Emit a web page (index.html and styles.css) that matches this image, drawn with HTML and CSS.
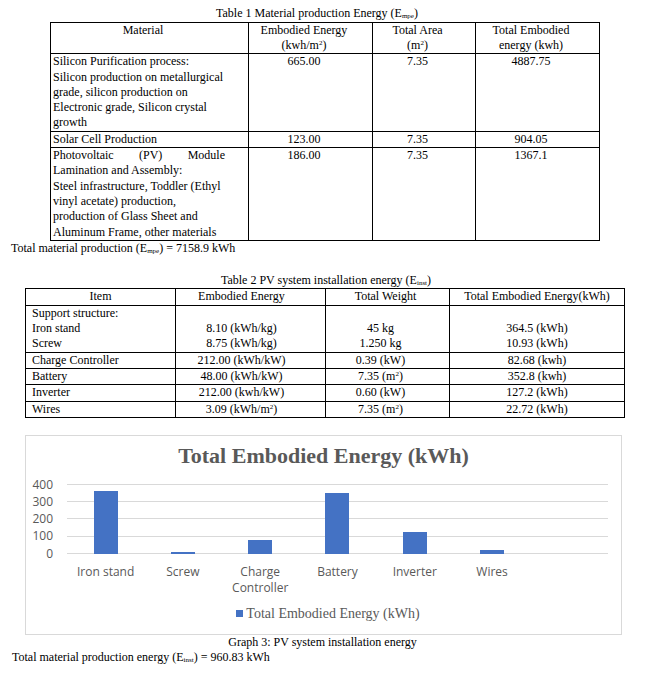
FILE: index.html
```html
<!DOCTYPE html>
<html>
<head>
<meta charset="utf-8">
<title>PV embodied energy</title>
<link rel="stylesheet" href="styles.css">
</head>
<body>
<div class="page">
  <div class="caption cap1">Table 1 Material production Energy (E<sub>mpe</sub>)</div>
  <table class="t1">
    <colgroup><col class="w198"><col class="w124"><col class="w103"><col class="w124"></colgroup>
    <tr>
      <th>Material</th>
      <th>Embodied Energy<br>(kwh/m<sup>2</sup>)</th>
      <th>Total Area<br>(m<sup>2</sup>)</th>
      <th>Total Embodied<br>energy (kwh)</th>
    </tr>
    <tr>
      <td class="txt">Silicon Purification process:<br>Silicon production on metallurgical<br>grade, silicon production on<br>Electronic grade, Silicon crystal<br>growth</td>
      <td>665.00</td><td>7.35</td><td>4887.75</td>
    </tr>
    <tr>
      <td class="txt">Solar Cell Production</td>
      <td>123.00</td><td>7.35</td><td>904.05</td>
    </tr>
    <tr>
      <td class="txt"><span class="just"><span>Photovoltaic</span><span>(PV)</span><span>Module</span></span>Lamination and Assembly:<br>Steel infrastructure, Toddler (Ethyl<br>vinyl acetate) production,<br>production of Glass Sheet and<br>Aluminum Frame, other materials</td>
      <td>186.00</td><td>7.35</td><td>1367.1</td>
    </tr>
  </table>
  <div class="total">Total material production (E<sub>mpe</sub>) = 7158.9 kWh</div>

  <div class="caption cap2">Table 2 PV system installation energy (E<sub>inst</sub>)</div>
  <table class="t2">
    <colgroup><col class="w150"><col class="w150"><col class="w124b"><col class="w175"></colgroup>
    <tr>
      <th>Item</th>
      <th class="e">Embodied Energy</th>
      <th class="wh">Total Weight</th>
      <th>Total Embodied Energy(kWh)</th>
    </tr>
    <tr>
      <td class="txt">Support structure:<br>Iron stand<br>Screw</td>
      <td class="e">&nbsp;<br>8.10 (kWh/kg)<br>8.75 (kWh/kg)</td>
      <td class="w">&nbsp;<br>45 kg<br>1.250 kg</td>
      <td>&nbsp;<br>364.5 (kWh)<br>10.93 (kWh)</td>
    </tr>
    <tr>
      <td class="txt">Charge Controller</td>
      <td class="e">212.00 (kWh/kW)</td>
      <td class="w">0.39 (kW)</td>
      <td>82.68 (kwh)</td>
    </tr>
    <tr>
      <td class="txt">Battery</td>
      <td class="e">48.00 (kWh/kW)</td>
      <td class="w">7.35 (m<sup>2</sup>)</td>
      <td>352.8 (kwh)</td>
    </tr>
    <tr>
      <td class="txt">Inverter</td>
      <td class="e">212.00 (kwh/kW)</td>
      <td class="w">0.60 (kW)</td>
      <td>127.2 (kWh)</td>
    </tr>
    <tr>
      <td class="txt">Wires</td>
      <td class="e">3.09 (kWh/m<sup>2</sup>)</td>
      <td class="w">7.35 (m<sup>2</sup>)</td>
      <td>22.72 (kWh)</td>
    </tr>
  </table>

  <div class="chart">
    <div class="chart-title">Total Embodied Energy (kWh)</div>
    <div class="plot-row">
      <div class="yaxis"><span>400</span><span>300</span><span>200</span><span>100</span><span>0</span></div>
      <div class="plot">
        <div class="grid"><i></i><i></i><i></i><i></i><i></i></div>
        <div class="bars">
          <div class="cat"><div class="bar" style="height:62.9px"></div></div>
          <div class="cat"><div class="bar" style="height:1.9px"></div></div>
          <div class="cat"><div class="bar" style="height:14.3px"></div></div>
          <div class="cat"><div class="bar" style="height:60.9px"></div></div>
          <div class="cat"><div class="bar" style="height:21.9px"></div></div>
          <div class="cat"><div class="bar" style="height:3.9px"></div></div>
          <div class="cat"></div>
        </div>
      </div>
    </div>
    <div class="xlabels">
      <span>Iron stand</span><span>Screw</span><span>Charge<br>Controller</span><span>Battery</span><span>Inverter</span><span>Wires</span><span></span>
    </div>
    <div class="legend"><i></i>Total Embodied Energy (kWh)</div>
  </div>
  <div class="caption cap3">Graph 3: PV system installation energy</div>
  <div class="total total2">Total material production energy (E<sub>inst</sub>) = 960.83 kWh</div>
</div>
</body>
</html>
```

FILE: styles.css
```css
* { box-sizing: border-box; }

body {
  margin: 0;
  background: #fff;
  color: #000;
  font-family: "Liberation Serif", "Times New Roman", serif;
  font-size: 12px;
  line-height: 15.3px;
}

.page {
  width: 647px;
  padding-top: 6.4px;
}

.caption {
  text-align: center;
  white-space: nowrap;
}
.cap1 { padding-right: 13px; }
.cap2 { padding-left: 5px; margin-top: 17px; }
.cap3 { padding-right: 2px; }

sub {
  font-size: 7px;
  line-height: 0;
  vertical-align: -1px;
}
sup {
  font-size: 7px;
  line-height: 0;
  vertical-align: 4px;
}

table {
  border-collapse: collapse;
  table-layout: fixed;
}
th, td {
  border: 1px solid #000;
  padding: 0;
  font-weight: normal;
  vertical-align: top;
  text-align: center;
  white-space: nowrap;
}

.t1 { margin-left: 50px; width: 549px; }
.t1 th, .t1 td { padding: 0 14px 0 1px; }
.t1 td.txt { text-align: left; padding-left: 2px; }
.w198 { width: 198px; }
.w124 { width: 124px; }
.w103 { width: 103px; }

.just {
  display: flex;
  justify-content: space-between;
  width: 172px;
}

.total {
  padding-left: 11px;
  white-space: nowrap;
}
.total2 { padding-left: 12px; }

.t2 { margin-left: 25px; width: 599px; }
.w150 { width: 150px; }
.w124b { width: 124px; }
.w175 { width: 175px; }
.t2 td.txt { text-align: left; padding-left: 6px; }
.t2 .e { padding-right: 18px; }
.t2 th.wh { padding-right: 4px; }
.t2 td.w { padding-right: 14px; }

/* chart */
.chart {
  margin: 17px 0 0 25px;
  width: 597px;
  height: 200px;
  border: 1px solid #d9d9d9;
  padding-top: 7.5px;
  color: #595959;
}
.chart-title {
  text-align: center;
  font-weight: bold;
  font-size: 22px;
  line-height: 26px;
}
.plot-row {
  display: flex;
  margin-top: 14.5px;
}
.yaxis {
  width: 41px;
  height: 70px;
  padding-right: 14px;
  display: flex;
  flex-direction: column;
  justify-content: space-between;
  font-family: "Open Sans", sans-serif;
  font-size: 12px;
}
.yaxis span {
  height: 1px;
  display: flex;
  align-items: center;
  justify-content: flex-end;
}
.plot {
  position: relative;
  width: 541px;
  height: 70px;
}
.grid {
  height: 70px;
  display: flex;
  flex-direction: column;
  justify-content: space-between;
}
.grid i {
  display: block;
  height: 1px;
  background: #d9d9d9;
}
.bars {
  position: absolute;
  inset: 0;
  display: flex;
}
.cat {
  flex: 1;
  display: flex;
  justify-content: center;
  align-items: flex-end;
}
.bar {
  width: 24px;
  background: #4472c4;
}
.xlabels {
  display: flex;
  margin: 10px 0 0 41px;
  width: 541px;
  font-family: "Open Sans", sans-serif;
  font-size: 12px;
  line-height: 16px;
}
.xlabels span {
  flex: 1;
  text-align: center;
}
.legend {
  display: flex;
  align-items: center;
  justify-content: center;
  margin-top: 9px;
  padding-left: 9px;
  font-size: 14px;
  line-height: 18px;
}
.legend i {
  width: 7px;
  height: 7px;
  background: #4472c4;
  margin-right: 3px;
}
```
